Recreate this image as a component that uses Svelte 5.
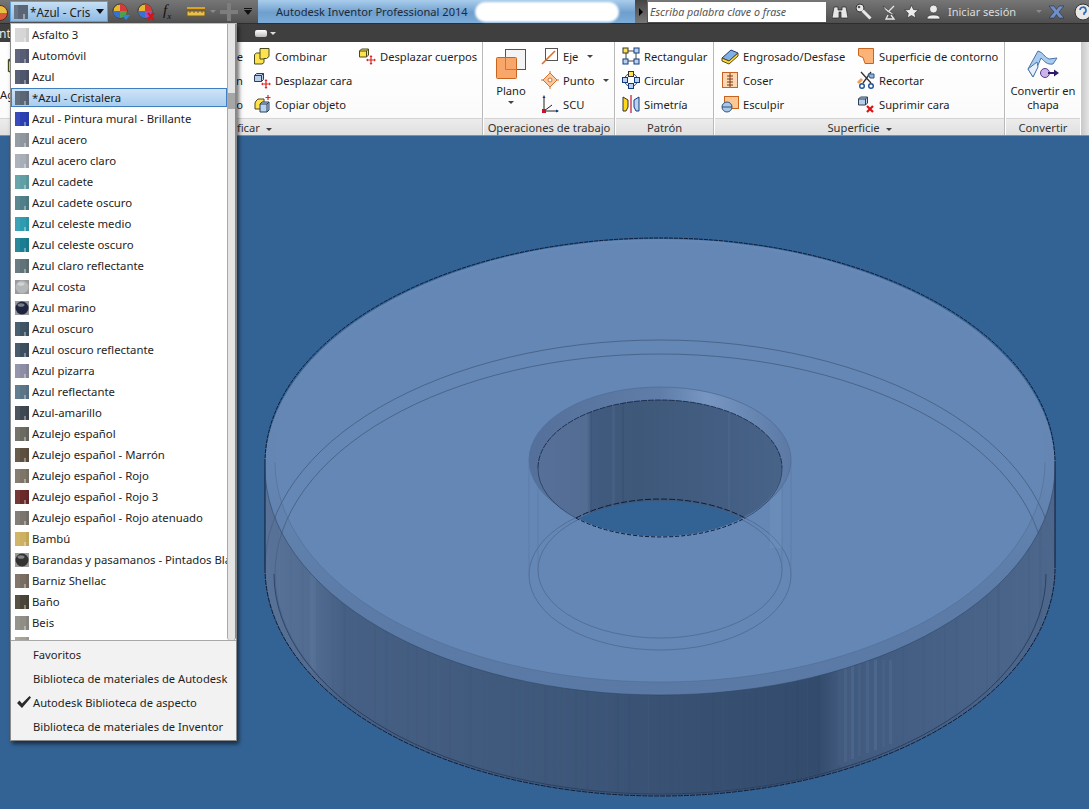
<script>
	const materials = [
		{ name: 'Asfalto 3', color: '#d6d6d6' },
		{ name: 'Automóvil', color: '#585c74' },
		{ name: 'Azul', color: '#4e566c' },
		{ name: '*Azul - Cristalera', color: '#5a6676', active: true },
		{ name: 'Azul - Pintura mural - Brillante', color: '#2a3fb4' },
		{ name: 'Azul acero', color: '#8f969e' },
		{ name: 'Azul acero claro', color: '#a8aeb6' },
		{ name: 'Azul cadete', color: '#5f9fa5' },
		{ name: 'Azul cadete oscuro', color: '#4f7f88' },
		{ name: 'Azul celeste medio', color: '#2f9bb0' },
		{ name: 'Azul celeste oscuro', color: '#1a7f92' },
		{ name: 'Azul claro reflectante', color: '#5f7378' },
		{ name: 'Azul costa', color: '#b4b8b8', ball: true },
		{ name: 'Azul marino', color: '#20263f', ball: true },
		{ name: 'Azul oscuro', color: '#3f5565' },
		{ name: 'Azul oscuro reflectante', color: '#3d5060' },
		{ name: 'Azul pizarra', color: '#8d8ea5' },
		{ name: 'Azul reflectante', color: '#5a7488' },
		{ name: 'Azul-amarillo', color: '#3f4852' },
		{ name: 'Azulejo español', color: '#6a6a62' },
		{ name: 'Azulejo español - Marrón', color: '#5d5040' },
		{ name: 'Azulejo español - Rojo', color: '#7d7568' },
		{ name: 'Azulejo español - Rojo 3', color: '#6a2a2a' },
		{ name: 'Azulejo español - Rojo atenuado', color: '#7a756e' },
		{ name: 'Bambú', color: '#cdb060' },
		{ name: 'Barandas y pasamanos - Pintados Blancos', color: '#333333', ball: true },
		{ name: 'Barniz Shellac', color: '#7a6d62' },
		{ name: 'Baño', color: '#4a4538' },
		{ name: 'Beis', color: '#8f8d85' },
		{ name: 'Baldosa', color: '#a5a295' }
	];

	const libraries = [
		{ name: 'Favoritos' },
		{ name: 'Biblioteca de materiales de Autodesk' },
		{ name: 'Autodesk Biblioteca de aspecto', checked: true },
		{ name: 'Biblioteca de materiales de Inventor' }
	];

	const icons = {
		combinar: '<path d="M7 1.5h9v8l-2.5 2H11v4l-2 1.5H1.5V7.5L3.5 6H7z" fill="#ffe34d" stroke="#4a4a20"/><path d="M7 6v6h4" fill="none" stroke="#4a4a20"/>',
		despCara: '<path d="M1.5 4.5l2-2h7v6l-2 2h-7z" fill="#b9cfe6" stroke="#2d3f5c"/><path d="M1.5 4.5h7v6M8.5 4.5l2-2" fill="none" stroke="#2d3f5c"/><path d="M13 9v8M9 13h8" stroke="#d22" stroke-width="1.2"/><path d="M13 8l-1.5 2h3zM13 18l-1.5-2h3zM8 13l2-1.5v3zM18 13l-2-1.5v3z" fill="#d22"/>',
		copiar: '<path d="M3 6l2-2h6v6l-2 4H2V8z" fill="#ffe34d" stroke="#4a4a20"/><path d="M7 9l2-2h7v8l-2 2H7z" fill="#b9d3ef" stroke="#2d3f5c"/><path d="M7 9h7v8M14 9l2-2" fill="none" stroke="#2d3f5c"/><path d="M15 0v5M12.5 2.500h5" stroke="#d22" stroke-width="1.2"/>',
		despCuerpos: '<path d="M1.500 4l2-2h7v6l-2 2h-7z" fill="#ffe34d" stroke="#4a4a20"/><path d="M1.500 4h7v6M8.500 4l2-2" fill="none" stroke="#4a4a20"/><path d="M13 9v8M9 13h8" stroke="#d22" stroke-width="1.2"/><path d="M13 8l-1.500 2h3zM13 18l-1.500-2h3zM8 13l2-1.500v3zM18 13l-2-1.500v3z" fill="#d22"/>',
		eje: '<rect x="4.500" y="1.500" width="12" height="12" fill="#fff" stroke="#555"/><path d="M1 17L14 4" stroke="#d9702a" stroke-width="1.600"/>',
		punto: '<path d="M9 2l7 7-7 7-7-7z" fill="#f6c9a0" stroke="#d9702a"/><circle cx="9" cy="9" r="2" fill="#fff" stroke="#d9702a"/><path d="M0 9h2M16 9h2M9 0v2M9 16v2" stroke="#d9702a"/>',
		scu: '<path d="M3 16V2M3 16h14M3 16l8-6" fill="none" stroke="#222"/><path d="M3 0l-1.500 3h3zM18 16l-3-1.500v3z" fill="#123a80"/><rect x="1" y="14" width="4" height="4" fill="#c8102e"/>',
		rectangular: '<path d="M4 4h10M4 14h10M4 4v10M14 4v10" stroke="#444"/><rect x="1" y="1" width="5" height="5" fill="#ffe34d" stroke="#333"/><rect x="12" y="1" width="5" height="5" fill="#b9d3ef" stroke="#123a80"/><rect x="1" y="12" width="5" height="5" fill="#b9d3ef" stroke="#123a80"/><rect x="12" y="12" width="5" height="5" fill="#b9d3ef" stroke="#123a80"/>',
		circular: '<circle cx="9" cy="9" r="6.500" fill="none" stroke="#345"/><rect x="6.500" y="0.500" width="5" height="5" fill="#ffe34d" stroke="#333"/><rect x="0.500" y="6.500" width="5" height="5" fill="#b9d3ef" stroke="#123a80"/><rect x="12.500" y="6.500" width="5" height="5" fill="#b9d3ef" stroke="#123a80"/><rect x="6.500" y="12.500" width="5" height="5" fill="#b9d3ef" stroke="#123a80"/>',
		simetria: '<path d="M1 2l5 3v7l-2 4H1z" fill="#ffd91a" stroke="#333"/><path d="M17 2l-5 3v7l2 4h3z" fill="#b9d3ef" stroke="#123a80"/><path d="M9 0v18" stroke="#c8102e" stroke-width="1.200"/>',
		engrosado: '<path d="M1 11l9-8 7 3-9 8z" fill="#7fb0e6" stroke="#1f3f70"/><path d="M1 11v3l7 3 9-8V6l-9 8z" fill="#ffdc3c" stroke="#5a4a10"/>',
		coser: '<rect x="1.500" y="1.500" width="15" height="15" fill="#fbd7b5" stroke="#c8641e"/><path d="M9 2v14M6 5h6M6 8h6M6 11h6M6 14h6" stroke="#7a3a10"/>',
		esculpir: '<rect x="3.500" y="1.500" width="14" height="12" fill="#fbc795" stroke="#c8641e"/><circle cx="6" cy="12" r="5" fill="#a9c7e8" stroke="#34527a"/><path d="M1 12h10" stroke="#34527a"/>',
		contorno: '<path d="M1.500 1.500h15v15H8l-2-6-4.500-2z" fill="#fbb377" stroke="#c8641e"/>',
		recortar: '<path d="M14 1L6 12M4 1l10 11" stroke="#333" stroke-width="1.300"/><circle cx="5" cy="15" r="2.300" fill="none" stroke="#1d4f9c" stroke-width="1.400"/><circle cx="14" cy="15" r="2.300" fill="none" stroke="#1d4f9c" stroke-width="1.400"/><path d="M0 11l4-4 2 2-4 4z" fill="#f0a050"/><path d="M11 3h6v4h-4z" fill="#8fb5e0" stroke="#34527a"/>',
		suprimir: '<path d="M1.500 4l2-2h7v6l-2 2h-7z" fill="#b9cfe6" stroke="#2d3f5c"/><path d="M1.500 4h7v6M8.500 4l2-2" fill="none" stroke="#2d3f5c"/><path d="M10 11l6 6M16 11l-6 6" stroke="#d11" stroke-width="2.200"/>',
		prisma: '<path d="M2 5l7-4 6 3v9l-7 4-6-3z" fill="#ffdf3c" stroke="#4a4a20"/><path d="M2 5l6 3 7-4M8 8v9" fill="none" stroke="#4a4a20"/>'
	};

	// faint vertical streaks on the outer wall
	const streaks = [];
	for (let i = 0; i < 60; i++) {
		const x = 270 + ((i * 137) % 780);
		streaks.push({ x, w: 1 + (i % 3), o: 0.02 + ((i * 7) % 10) / 300, light: i % 3 === 0 });
	}
	const bright = [838, 844, 851, 858, 866, 874, 882, 889];
</script>

{#snippet icon(name, size = 18)}
	<svg class="ic" width={size} height={size} viewBox="0 0 18 18">{@html icons[name]}</svg>
{/snippet}

{#snippet tool(name, label)}
	<div class="tool">
		{@render icon(name)}
		<span>{label}</span>
	</div>
{/snippet}

<div class="app">
	<header class="titlebar">
		<div class="qat">
			<svg class="edge-ball" width="8" height="18" viewBox="0 0 8 18">
				<circle cx="0" cy="10" r="7.500" fill="#d9573a" stroke="#5a2a20" />
				<path d="M0 3a7 7 0 0 1 7 7H0z" fill="#e8c040" />
			</svg>
			<div class="combo">
				<svg class="swatch" width="14" height="14" viewBox="0 0 14 14">
					<rect width="14" height="14" fill="#5a6676" />
					<rect width="4" height="14" fill="#fff" opacity="0.1" />
					<rect x="9" y="9" width="2" height="5" fill="#fff" opacity="0.4" />
				</svg>
				<span class="combo-text">*Azul - Cris</span>
				<i class="tri"></i>
			</div>
			<svg class="qat-ic first" width="18" height="18" viewBox="0 0 18 18">
				<circle cx="8" cy="8" r="7" fill="#e8b830" stroke="#333" />
				<path d="M8 8V1a7 7 0 0 1 7 7z" fill="#d83a3a" />
				<path d="M8 8H1a7 7 0 0 0 7 7z" fill="#3a70d0" />
				<path d="M8 8h7a7 7 0 0 1-7 7z" fill="#50a050" />
				<path d="M10 12h8l-4 5z" fill="#2a8ad8" />
			</svg>
			<svg class="qat-ic second" width="19" height="18" viewBox="0 0 19 18">
				<circle cx="8" cy="8" r="7" fill="#e8b830" stroke="#333" />
				<path d="M8 8V1a7 7 0 0 1 7 7z" fill="#d83a3a" />
				<path d="M8 8H1a7 7 0 0 0 7 7z" fill="#3a70d0" />
				<path d="M8 8h7a7 7 0 0 1-7 7z" fill="#a050c0" />
				<path d="M11 10l6 7M17 10l-6 7" stroke="#d11" stroke-width="2.200" />
			</svg>
			<span class="fx">f<sub>x</sub></span>
			<svg class="qat-ic measure" width="20" height="12" viewBox="0 0 20 12">
				<rect x="1" y="1" width="18" height="2" fill="#e0a020" />
				<rect x="1" y="5" width="18" height="5" fill="#e8c050" stroke="#7a5a10" />
				<path d="M4 5v2M8 5v2M12 5v2M16 5v2" stroke="#7a5a10" />
			</svg>
			<i class="tri small dim"></i>
			<svg class="qat-ic plus" width="18" height="18" viewBox="0 0 18 18">
				<path d="M7 0h4v7h7v4h-7v7H7v-7H0V7h7z" fill="#7d7d7d" />
			</svg>
			<span class="qat-menu"><b></b><i class="tri"></i></span>
		</div>
		<div class="caption">
			<span>Autodesk Inventor Professional 2014</span>
			<div class="blob"></div>
		</div>
		<div class="help">
			<div class="expand"><i></i></div>
			<div class="search">Escriba palabra clave o frase</div>
			<div class="help-icons">
				<svg width="16" height="16" viewBox="0 0 16 16">
					<path d="M2 3h4v3h4V3h4l2 11H9V8H7v6H0z" fill="#e6e6e6" stroke="#222" stroke-width="0.700" />
				</svg>
				<svg width="17" height="17" viewBox="0 0 17 17">
					<circle cx="5" cy="5" r="4" fill="#e8e8e8" stroke="#333" />
					<path d="M7.500 7.500l8 8" stroke="#e8e8e8" stroke-width="3" />
					<circle cx="4" cy="4" r="1.300" fill="#555" />
				</svg>
				<svg class="sat" width="15" height="16" viewBox="0 0 15 16">
					<path d="M1 2c2 5 6 8 12 9z" fill="#e8e8e8" stroke="#333" stroke-width="0.600" />
					<path d="M7 7l5-5M6 11l-2 4h8l-3-4" fill="none" stroke="#e8e8e8" stroke-width="1.300" />
				</svg>
				<svg width="15" height="15" viewBox="0 0 15 15">
					<path d="M7.500 1l2 4.500 4.800.5-3.600 3.200 1 4.800-4.200-2.500L3.300 14l1-4.800L.7 6l4.800-.5z" fill="#ececec" stroke="#333" stroke-width="0.700" />
				</svg>
				<svg width="15" height="16" viewBox="0 0 15 16">
					<circle cx="7.500" cy="5" r="4" fill="#ececec" stroke="#333" stroke-width="0.700" />
					<path d="M1 15c0-3 2-4 6.500-4s6.500 1 6.500 4z" fill="#ececec" stroke="#333" stroke-width="0.700" />
				</svg>
				<span class="login">Iniciar sesión</span>
				<i class="tri small dim"></i>
				<svg class="x" width="15" height="14" viewBox="0 0 15 14">
					<path d="M0 1h5l2.500 3.500L10 1h5L10 7l5 6h-5L7.500 9.500 5 13H0l5-6z" fill="#6f8fc8" stroke="#223" stroke-width="0.500" />
				</svg>
				<svg class="globe" width="18" height="18" viewBox="0 0 18 18">
					<circle cx="9" cy="9" r="8" fill="#e8e8e8" stroke="#333" />
					<path d="M6 7a3 3 0 1 1 4 3v2" fill="none" stroke="#2a6ab0" stroke-width="1.600" />
				</svg>
			</div>
		</div>
	</header>

	<nav class="tabs">
		<span class="tab">nt</span>
		<span class="panel-toggle"><b></b><i class="tri small light"></i></span>
	</nav>

	<section class="ribbon">
		<div class="panel modify">
			<div class="panel-body">
				<div class="big-stub">
					{@render icon('prisma', 28)}
					<span>Agregar</span>
				</div>
				<div class="col hidden-col">
					<div class="tool"><span>Empalme</span></div>
					<div class="tool"><span>Chaflán</span></div>
					<div class="tool"><span>Vaciado</span></div>
				</div>
				<div class="col c1">
					{@render tool('combinar', 'Combinar')}
					{@render tool('despCara', 'Desplazar cara')}
					{@render tool('copiar', 'Copiar objeto')}
				</div>
				<div class="col">
					{@render tool('despCuerpos', 'Desplazar cuerpos')}
				</div>
			</div>
			<div class="panel-title">Modificar <i class="tri small dark"></i></div>
		</div>

		<div class="panel work">
			<div class="panel-body">
				<div class="big">
					<svg width="32" height="32" viewBox="0 0 32 32">
						<rect x="10.500" y="0.500" width="20" height="20" fill="#f4f4f4" stroke="#555" />
						<rect x="1.500" y="8.500" width="20" height="21" rx="1" fill="#f9a66a" stroke="#c8641e" />
						<path d="M10.500 8.500v12h11" fill="none" stroke="#c8783a" />
					</svg>
					<span>Plano</span>
					<i class="tri small dark"></i>
				</div>
				<div class="col">
					<div class="tool">{@render icon('eje')}<span>Eje</span><i class="tri small dark"></i></div>
					<div class="tool">{@render icon('punto')}<span>Punto</span><i class="tri small dark"></i></div>
					{@render tool('scu', 'SCU')}
				</div>
			</div>
			<div class="panel-title">Operaciones de trabajo</div>
		</div>

		<div class="panel pattern">
			<div class="panel-body">
				<div class="col">
					{@render tool('rectangular', 'Rectangular')}
					{@render tool('circular', 'Circular')}
					{@render tool('simetria', 'Simetría')}
				</div>
			</div>
			<div class="panel-title">Patrón</div>
		</div>

		<div class="panel surface">
			<div class="panel-body">
				<div class="col">
					{@render tool('engrosado', 'Engrosado/Desfase')}
					{@render tool('coser', 'Coser')}
					{@render tool('esculpir', 'Esculpir')}
				</div>
				<div class="col">
					{@render tool('contorno', 'Superficie de contorno')}
					{@render tool('recortar', 'Recortar')}
					{@render tool('suprimir', 'Suprimir cara')}
				</div>
			</div>
			<div class="panel-title">Superficie <i class="tri small dark"></i></div>
		</div>

		<div class="panel convert">
			<div class="panel-body">
				<div class="big">
					<svg width="32" height="32" viewBox="0 0 32 32">
						<path d="M1 20L11 2c5 1 7 7 11 8l8-1-4 6c-6 1-9-3-12-6L6 28z" fill="#a9cbef" stroke="#4a74a8" />
						<path d="M1 20l5 8 5-10-1-5z" fill="#e6f0fb" stroke="#4a74a8" />
						<circle cx="18" cy="24" r="4.500" fill="#c9b5e8" stroke="#5a3a90" />
						<path d="M21 24h7" stroke="#2f1a6a" stroke-width="2" />
						<path d="M32 24l-5-3.500v7z" fill="#2f1a6a" />
					</svg>
					<span>Convertir en chapa</span>
				</div>
			</div>
			<div class="panel-title">Convertir</div>
		</div>
		<div class="ribbon-end"></div>
	</section>

	<main class="viewport">
		<svg class="scene" viewBox="0 136 1089 673" width="1089" height="673">
			<defs>
				<linearGradient id="wall" x1="265" x2="1055" y1="0" y2="0" gradientUnits="userSpaceOnUse">
					<stop offset="0" stop-color="#587298" />
					<stop offset="0.06" stop-color="#526b90" />
					<stop offset="0.1" stop-color="#465f84" />
					<stop offset="0.3" stop-color="#405a7d" />
					<stop offset="0.5" stop-color="#395274" />
					<stop offset="0.7" stop-color="#334b6c" />
					<stop offset="0.73" stop-color="#415a7e" />
					<stop offset="0.82" stop-color="#445e84" />
					<stop offset="1" stop-color="#4c668c" />
				</linearGradient>
				<linearGradient id="rim" x1="0" x2="0" y1="239" y2="695" gradientUnits="userSpaceOnUse">
					<stop offset="0" stop-color="#6789b7" />
					<stop offset="0.5" stop-color="#6586b3" />
					<stop offset="0.8" stop-color="#5c7ba7" />
					<stop offset="1" stop-color="#5a79a5" />
				</linearGradient>
				<linearGradient id="hole" x1="538" x2="782" y1="0" y2="0" gradientUnits="userSpaceOnUse">
					<stop offset="0" stop-color="#56709a" />
					<stop offset="0.2" stop-color="#536c92" />
					<stop offset="0.22" stop-color="#415b80" />
					<stop offset="0.4" stop-color="#3e5879" />
					<stop offset="0.7" stop-color="#435d82" />
					<stop offset="1" stop-color="#486388" />
				</linearGradient>
				<linearGradient id="lip" x1="529" x2="791" y1="0" y2="0" gradientUnits="userSpaceOnUse">
					<stop offset="0" stop-color="#54709a" />
					<stop offset="0.5" stop-color="#5f7da8" />
					<stop offset="0.68" stop-color="#7796c2" />
					<stop offset="1" stop-color="#5b79a4" />
				</linearGradient>
				<clipPath id="wall-clip">
					<path d="M265 467V568A395 228 0 0 0 1055 568V467z" />
				</clipPath>
				<clipPath id="hole-clip">
					<ellipse cx="660" cy="468" rx="122" ry="68" />
				</clipPath>
			</defs>

			<path d="M265 467V568A395 228 0 0 0 1055 568V467z" fill="url(#wall)" />
			<g clip-path="url(#wall-clip)">
				{#each streaks as s}
					<rect x={s.x} y="460" width={s.w} height="340" fill={s.light ? '#8aa4c8' : '#1e3350'} opacity={s.o} />
				{/each}
				{#each bright as x, i}
					<rect {x} y="660" width="3" height={105 - i * 3} fill="#7f9cc4" opacity={0.08 + (i % 3) * 0.04} />
				{/each}
				<rect x="310" y="575" width="6" height="95" fill="#7f9cc4" opacity="0.12" />
			</g>

			<ellipse cx="660" cy="467" rx="395" ry="228" fill="url(#rim)" />
			<ellipse cx="660" cy="462" rx="385" ry="220" fill="#6487b5" />

			<g fill="none" stroke="#4b6589" stroke-width="1">
				<ellipse cx="660" cy="568" rx="395" ry="228" />
				<ellipse cx="660" cy="574" rx="385" ry="220" />
				<ellipse cx="660" cy="575" rx="131" ry="75" opacity="0.7" />
				<ellipse cx="660" cy="570" rx="122" ry="68" opacity="0.7" />
				<path d="M275 462A385 220 0 0 0 1045 462" opacity="0.45" />
			</g>

			<rect x="770" y="470" width="12" height="78" fill="#8fa8cc" opacity="0.14" />
			<path d="M538 470V570M782 470V570M529 462V575M791 462V575" stroke="#5b79a4" fill="none" opacity="0.6" />

			<ellipse cx="660" cy="460" rx="131" ry="73" fill="url(#lip)" stroke="#56719a" />
			<ellipse cx="660" cy="468" rx="122" ry="68" fill="url(#hole)" />
			<g clip-path="url(#hole-clip)">
				<rect x="590" y="400" width="2" height="130" fill="#1e3350" opacity="0.12" />
				<rect x="612" y="400" width="3" height="130" fill="#8aa4c8" opacity="0.08" />
				<rect x="622" y="400" width="2" height="130" fill="#1e3350" opacity="0.12" />
				<rect x="728" y="400" width="2" height="130" fill="#8aa4c8" opacity="0.08" />
				<ellipse cx="660" cy="569" rx="122" ry="68" fill="#336394" />
			</g>

			<g fill="none" stroke="#0b1b38" stroke-width="1">
				<path d="M265 463A395 225 0 0 1 1055 463" stroke-dasharray="4 1" />
				<path d="M265 463V568M1055 463V568" />
				<path d="M265 568A395 228 0 0 0 1055 568" stroke-dasharray="5 1" />
				<path d="M274 574A386 220 0 0 0 1046 574" opacity="0.5" />
				<path d="M265 467A395 228 0 0 0 1055 467" stroke="#2c4363" opacity="0.55" />
				<path d="M538 468A122 68 0 0 1 782 468" stroke-dasharray="6 1" opacity="0.75" />
				<path d="M538 468A122 68 0 0 0 576 518" opacity="0.5" />
				<path d="M576 518A122 68 0 0 0 745 518" stroke-dasharray="4 2" />
				<path d="M576 518A122 68 0 0 1 745 518" stroke-dasharray="6 2" />
				<path d="M745 518A122 68 0 0 0 782 468" opacity="0.5" />
			</g>
		</svg>
	</main>

	<div class="dropdown">
		<ul class="material-list">
			{#each materials as m}
				<li class:active={m.active}>
					<svg class="swatch" width="14" height="14" viewBox="0 0 14 14">
						{#if m.ball}
							<rect width="14" height="14" fill="#9a9a9a" />
							<circle cx="7" cy="7" r="6.500" fill={m.color} />
							<ellipse cx="6" cy="4" rx="3.500" ry="1.800" fill="#fff" opacity="0.4" />
						{:else}
							<rect width="14" height="14" fill={m.color} />
							<rect width="5" height="14" fill="#fff" opacity="0.07" />
							<rect x="9" y="10" width="2" height="4" fill="#fff" opacity="0.35" />
							<rect x="11" y="0" width="3" height="14" fill="#000" opacity="0.06" />
						{/if}
					</svg>
					<span>{m.name}</span>
				</li>
			{/each}
			<div class="scrollbar"><div class="thumb"></div></div>
		</ul>
		<ul class="library-list">
			{#each libraries as lib}
				<li>
					<span class="check">
						{#if lib.checked}
							<svg width="16" height="14" viewBox="0 0 16 14">
								<path d="M1 8l2.500-2.500 2.500 3L13.500 1 15 2.500 6 13z" fill="#2a2a2a" />
							</svg>
						{/if}
					</span>
					<span>{lib.name}</span>
				</li>
			{/each}
		</ul>
	</div>
</div>

<style>
	:global(body) {
		margin: 0;
		background: #336394;
	}

	.app {
		position: relative;
		display: flex;
		flex-direction: column;
		width: 1089px;
		height: 809px;
		overflow: hidden;
		font-family: 'Noto Sans', 'Open Sans', sans-serif;
		font-size: 11.2px;
		color: #1e1e1e;
	}

	/* small triangles used all over the ribbon */
	.tri {
		display: inline-block;
		width: 0;
		height: 0;
		border-left: 4px solid transparent;
		border-right: 4px solid transparent;
		border-top: 5px solid #111;
	}
	.tri.small {
		border-left-width: 3px;
		border-right-width: 3px;
		border-top-width: 3px;
	}
	.tri.dim {
		border-top-color: #8a8a8a;
	}
	.tri.light {
		border-top-color: #ddd;
	}
	.tri.dark {
		border-top-color: #444;
	}

	/* title bar */
	.titlebar {
		display: flex;
		height: 23px;
		flex: none;
		border-bottom: 1px solid #2e2e2e;
	}
	.qat {
		display: flex;
		align-items: center;
		width: 258px;
		flex: none;
		background: linear-gradient(#767676, #505050);
	}
	.edge-ball {
		flex: none;
		width: 8px;
	}
	.combo {
		display: flex;
		align-items: center;
		width: 98px;
		height: 21px;
		box-sizing: border-box;
		margin-left: 2px;
		padding: 0 3px;
		border: 1px solid #5ea0dc;
		background: linear-gradient(#c6dff5, #8fbbe4);
		flex: none;
		color: #222;
		font-size: 11.7px;
	}
	.combo-text {
		margin-left: 2px;
		flex: 1;
		white-space: nowrap;
	}
	.qat-ic {
		flex: none;
		margin-left: 8px;
	}
	.qat-ic.first {
		margin-left: 4px;
	}
	.qat-ic.second {
		margin-left: 7px;
	}
	.fx {
		margin-left: 7px;
		width: 12px;
		font-family: 'Liberation Serif', serif;
		font-style: italic;
		font-size: 15px;
		color: #111;
	}
	.fx sub {
		font-size: 9px;
	}
	.qat-ic.measure {
		margin-left: 11px;
	}
	.qat .tri.dim {
		margin-left: 4px;
	}
	.qat-ic.plus {
		margin-left: 4px;
	}
	.qat-menu {
		display: flex;
		flex-direction: column;
		align-items: center;
		gap: 1px;
		margin-left: 6px;
	}
	.qat-menu b {
		width: 8px;
		height: 1px;
		background: #111;
	}

	.caption {
		display: flex;
		align-items: center;
		flex: 1;
		padding-left: 18px;
		background: linear-gradient(#a9cdec, #6f9fcd 55%, #7cacd8);
		font-size: 11.1px;
		color: #1d2a38;
	}
	.blob {
		width: 144px;
		height: 20px;
		margin-left: 7px;
		border-radius: 10px;
		background: #fff;
		filter: blur(1px);
	}

	.help {
		display: flex;
		align-items: stretch;
		width: 454px;
		flex: none;
		background: linear-gradient(#767676, #4e4e4e);
	}
	.expand {
		display: flex;
		align-items: center;
		justify-content: center;
		width: 12px;
		background: linear-gradient(#444, #777);
	}
	.expand i {
		border-left: 4px solid #000;
		border-top: 4px solid transparent;
		border-bottom: 4px solid transparent;
	}
	.search {
		width: 178px;
		margin: 2px 0 1px 1px;
		padding-left: 2px;
		box-sizing: border-box;
		line-height: 20px;
		background: #fff;
		color: #555;
		font-style: italic;
		font-size: 10.7px;
	}
	.help-icons {
		display: flex;
		align-items: center;
		gap: 7px;
		padding-left: 6px;
		overflow: hidden;
		flex: 1;
	}
	.help-icons svg {
		flex: none;
	}
	.help-icons .sat {
		margin-left: 3px;
	}
	.login {
		color: #ddd;
		font-size: 11px;
		white-space: nowrap;
	}
	.help-icons .tri {
		margin-left: 13px;
		flex: none;
	}
	.globe {
		margin-left: 3px;
	}

	/* dark tab strip */
	.tabs {
		display: flex;
		align-items: center;
		height: 18px;
		flex: none;
		background: #3f3f3f;
		color: #e8e8e8;
	}
	.tab {
		margin-left: -1px;
		font-size: 12px;
	}
	.panel-toggle {
		display: flex;
		align-items: center;
		gap: 3px;
		margin-left: 244px;
	}
	.panel-toggle b {
		width: 12px;
		height: 7px;
		border-radius: 2px;
		background: linear-gradient(#fff, #bbb);
	}

	/* ribbon */
	.ribbon {
		display: flex;
		height: 93px;
		flex: none;
		background: #fff;
		border-bottom: 1px solid #8d8d8d;
	}
	.panel {
		display: flex;
		flex-direction: column;
		box-sizing: border-box;
		border-right: 1px solid #b9b9b9;
		margin-right: 1px;
	}
	.panel-body {
		display: flex;
		flex: 1;
		min-height: 0;
		background: linear-gradient(#fff, #fbfbfb);
	}
	.panel-title {
		flex: none;
		box-sizing: border-box;
		height: 17px;
		line-height: 17px;
		text-align: center;
		background: linear-gradient(#ececec, #e0e0e0);
		border-top: 1px solid #d4d4d4;
		color: #333;
		white-space: nowrap;
	}
	.panel-title .tri {
		vertical-align: middle;
		margin-left: 3px;
	}
	.col {
		display: flex;
		flex-direction: column;
		padding-top: 2px;
	}
	.tool {
		display: flex;
		align-items: center;
		height: 24px;
		gap: 4px;
		white-space: nowrap;
	}
	.tool .tri {
		margin-left: 5px;
	}
	.ic {
		flex: none;
	}
	.big {
		display: flex;
		flex-direction: column;
		align-items: center;
		text-align: center;
		padding-top: 5px;
	}

	.modify {
		width: 483px;
	}
	.big-stub {
		display: flex;
		flex-direction: column;
		align-items: flex-start;
		padding-top: 9px;
		width: 60px;
		margin-left: -20px;
		margin-right: 110px;
	}
	.big-stub span {
		margin: 8px 0 0 20px;
		white-space: nowrap;
	}
	.big-stub svg {
		margin-left: 26px;
		width: 22px;
	}
	.hidden-col {
		width: 93px;
		align-items: flex-end;
		margin-right: 10px;
	}
	.c1 {
		width: 105px;
	}

	.work {
		width: 131px;
	}
	.work .big {
		width: 54px;
		padding-top: 7px;
		margin-right: 3px;
		flex: none;
	}
	.work .big span {
		margin-top: 2px;
	}
	.work .big .tri {
		margin-top: 3px;
	}

	.pattern {
		width: 98px;
	}
	.pattern .col {
		padding-left: 6px;
	}

	.surface {
		width: 290px;
	}
	.surface .col {
		padding-left: 6px;
		width: 130px;
	}

	.convert {
		width: 74px;
		border-right: none;
	}
	.convert .big {
		width: 100%;
		line-height: 14px;
		padding-top: 7px;
	}
	.convert .big span {
		margin-top: 3px;
	}
	.ribbon-end {
		flex: 1;
		background: linear-gradient(90deg, #c8c8c8, #e4e4e4);
	}

	/* 3D view */
	.viewport {
		flex: 1;
		min-height: 0;
		background: #336394;
	}
	.scene {
		display: block;
	}

	/* material menu, lies over the ribbon and the view */
	.dropdown {
		position: absolute;
		left: 10px;
		top: 23px;
		width: 227px;
		height: 718px;
		box-sizing: border-box;
		display: flex;
		flex-direction: column;
		background: #fff;
		border: 1px solid #8a8a8a;
		border-top-color: #c0c0c0;
		box-shadow: 2px 3px 4px rgba(0, 0, 0, 0.55);
	}
	.material-list,
	.library-list {
		list-style: none;
		margin: 0;
		padding: 0;
	}
	.material-list {
		position: relative;
		flex: 1;
		min-height: 0;
		overflow: hidden;
		padding-right: 9px;
		font-size: 11.35px;
	}
	.material-list li {
		display: flex;
		align-items: center;
		height: 21px;
		box-sizing: border-box;
		padding-left: 4px;
		gap: 3px;
		white-space: nowrap;
		overflow: hidden;
	}
	.material-list li.active {
		background: linear-gradient(#cfe3f7, #a9cdef);
		border: 1px solid #3f7fbf;
		padding-left: 3px;
		height: 19px;
		margin: 1px 0;
	}
	.swatch {
		flex: none;
	}
	.scrollbar {
		position: absolute;
		top: 0;
		right: 0;
		bottom: 0;
		width: 9px;
		border-left: 1px solid #aaa;
		border-right: 1px solid #888;
		box-sizing: border-box;
		background: #e4e4e4;
		border-radius: 0 0 3px 3px;
	}
	.thumb {
		position: absolute;
		top: 69px;
		left: 0;
		right: 0;
		height: 16px;
		background: #a6a6a6;
	}
	.library-list {
		flex: none;
		background: #f2f2f2;
		border-top: 1px solid #a8a8a8;
		padding: 1px 0 2px;
	}
	.library-list li {
		display: flex;
		align-items: center;
		height: 24px;
		padding-left: 5px;
		white-space: nowrap;
	}
	.check {
		display: flex;
		width: 17px;
		flex: none;
	}
</style>
